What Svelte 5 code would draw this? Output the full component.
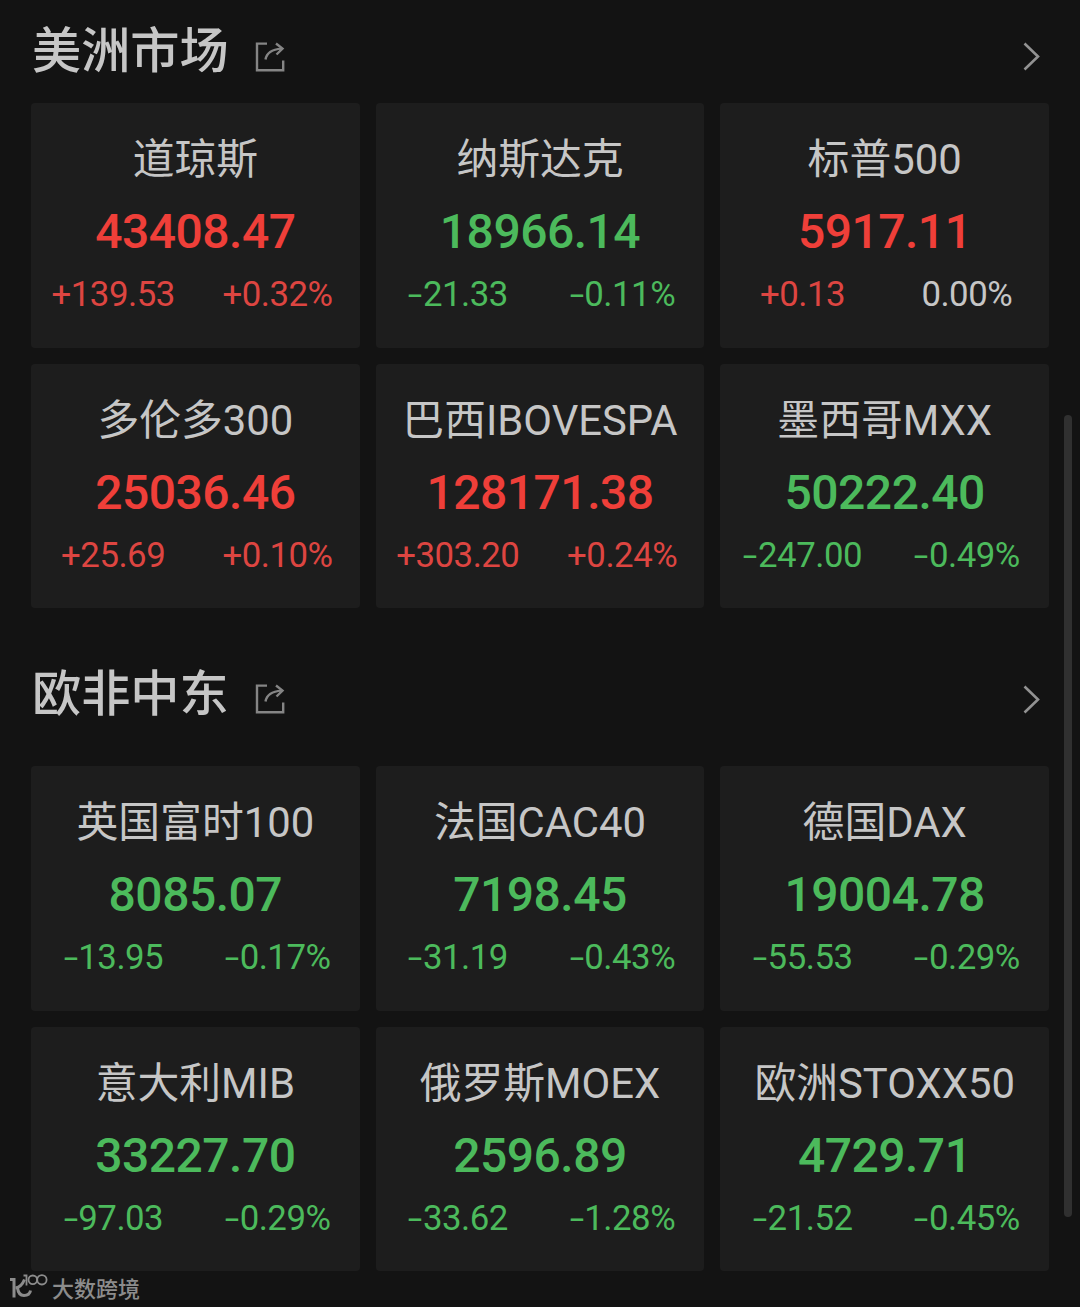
<script>
  const markets = [
    {
      title: '美洲市场',
      items: [
        { name: '道琼斯', price: '43408.47', change: '+139.53', percent: '+0.32%' },
        { name: '纳斯达克', price: '18966.14', change: '-21.33', percent: '-0.11%' },
        { name: '标普500', price: '5917.11', change: '+0.13', percent: '0.00%' },
        { name: '多伦多300', price: '25036.46', change: '+25.69', percent: '+0.10%' },
        { name: '巴西IBOVESPA', price: '128171.38', change: '+303.20', percent: '+0.24%' },
        { name: '墨西哥MXX', price: '50222.40', change: '-247.00', percent: '-0.49%' }
      ]
    },
    {
      title: '欧非中东',
      items: [
        { name: '英国富时100', price: '8085.07', change: '-13.95', percent: '-0.17%' },
        { name: '法国CAC40', price: '7198.45', change: '-31.19', percent: '-0.43%' },
        { name: '德国DAX', price: '19004.78', change: '-55.53', percent: '-0.29%' },
        { name: '意大利MIB', price: '33227.70', change: '-97.03', percent: '-0.29%' },
        { name: '俄罗斯MOEX', price: '2596.89', change: '-33.62', percent: '-1.28%' },
        { name: '欧洲STOXX50', price: '4729.71', change: '-21.52', percent: '-0.45%' }
      ]
    }
  ];

  // red is up, green is down
  function trend(value) {
    if (value.startsWith('+')) return 'up';
    if (value.startsWith('-')) return 'down';
    return 'flat';
  }
</script>

{#snippet signed(value)}
  {#if value.startsWith('-')}<span class="minus">-</span>{value.slice(1)}{:else}{value}{/if}
{/snippet}

<div class="page">
  {#each markets as market}
    <section>
      <header>
        <h2>{market.title}</h2>
        <svg class="share" viewBox="0 0 32 32" width="32" height="32">
          <path d="M13 2.600H3V29.200H29.200V19.500" />
          <path d="M11.500 18.500C12.500 12.500 17 8.300 27.500 7.600" />
          <path d="M22 2.500L28.500 7.600L22.500 13.500" />
        </svg>
        <svg class="chevron" viewBox="0 0 20 32" width="20" height="32">
          <path d="M3.500 3.500L17 16.500L3.500 29.500" />
        </svg>
      </header>

      <div class="grid">
        {#each market.items as item}
          <div class="card">
            <div class="name">{item.name}</div>
            <div class="price {trend(item.change)}">{item.price}</div>
            <div class="changes">
              <span class={trend(item.change)}>{@render signed(item.change)}</span>
              <span class={trend(item.percent)}>{@render signed(item.percent)}</span>
            </div>
          </div>
        {/each}
      </div>
    </section>
  {/each}

  <footer>
    <svg class="logo" viewBox="0 0 40 28" width="40" height="28">
      <path d="M2 6.500H6V24.500" />
      <path d="M16.500 6.500C14.500 11.500 11.500 14.500 7.500 15" />
      <path d="M9.500 14.500C10 19.500 12 22.500 16 22.500C19.500 22.500 22 20.500 22.500 17.500" />
      <path class="thin" d="M15.500 2.500H18.500V12.500" />
      <circle class="thin" cx="24.800" cy="6.800" r="4.300" />
      <circle class="thin" cx="33.900" cy="6.800" r="4.700" />
    </svg>
    <span>大数跨境</span>
  </footer>

  <div class="scrollbar"></div>
</div>

<style>
  :global(body) {
    background: #131313;
  }

  .page {
    position: relative;
    box-sizing: border-box;
    height: 1307px;
    padding: 0 31px;
    overflow: hidden;
    background: #131313;
    color: #c6c6c6;
    font-family: Roboto, "Noto Sans CJK SC", sans-serif;
  }

  /* ===== HEADER ===== */
  header {
    display: flex;
    align-items: flex-start;
    box-sizing: border-box;
    height: 103px;
    padding-top: 13px;
  }

  section + section header {
    height: 158px;
    padding-top: 47.500px;
  }

  h2 {
    margin: 0 0 0 1px;
    font-family: "Noto Sans", "Noto Sans CJK SC", sans-serif;
    font-size: 49.200px;
    font-weight: 500;
    line-height: 72px;
  }

  svg {
    fill: none;
    stroke: #858585;
  }

  .share {
    margin: 27.500px 0 0 25px;
    stroke-width: 2.4;
  }

  .chevron {
    margin: 27px 8px 0 auto;
    stroke: #929292;
    stroke-width: 2.6;
  }

  /* ===== CARDS ===== */
  .grid {
    display: grid;
    grid-template-columns: repeat(3, 1fr);
    grid-auto-rows: 244.5px;
    gap: 16px;
  }

  .card {
    box-sizing: border-box;
    padding-top: 27px;
    border-radius: 4px;
    background: #1d1d1d;
    text-align: center;
    white-space: nowrap;
  }

  .name {
    font-size: 41.800px;
    line-height: 60px;
  }

  .price {
    margin-top: 12px;
    font-size: 48px;
    font-weight: 500;
    letter-spacing: -0.500px;
    line-height: 60px;
  }

  .changes {
    display: grid;
    grid-template-columns: 1fr 1fr;
    margin-top: 12px;
    font-size: 34.800px;
    letter-spacing: -0.500px;
    line-height: 40px;
  }

  .minus {
    display: inline-block;
    margin: 0 3.500px 0 2.500px;
    transform: scaleX(1.5);
  }

  .up {
    color: #ef3f39;
  }

  .down {
    color: #4cba5c;
  }

  .changes .up {
    color: #dd4541;
  }

  .changes .flat {
    color: #c6c6c6;
  }

  /* ===== FOOTER ===== */
  footer {
    display: flex;
    align-items: center;
    height: 32px;
    margin-left: -23px;
    color: #8c8c8c;
    font-size: 22px;
    font-weight: 500;
  }

  footer span {
    margin-left: 4px;
  }

  .logo {
    stroke: #8c8c8c;
    stroke-width: 3;
  }

  .logo .thin {
    stroke-width: 1.8;
  }

  .scrollbar {
    position: absolute;
    top: 415px;
    right: 8px;
    width: 8px;
    height: 802px;
    border-radius: 4px;
    background: #303030;
  }
</style>
